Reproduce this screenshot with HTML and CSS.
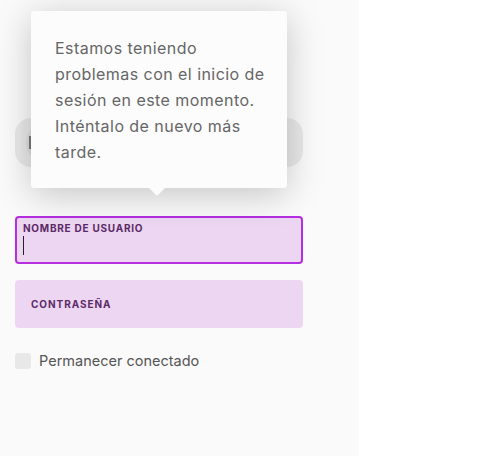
FILE: index.html
```html
<!DOCTYPE html>
<html lang="es">
<head>
<meta charset="utf-8">
<link rel="stylesheet" href="styles.css">
</head>
<body>
<div class="page">
  <div class="panel">
    <div class="sso">
      <div class="sso-inner"><span class="sso-mark"></span></div>
    </div>
    <div class="tooltip">
      Estamos teniendo problemas con el inicio de sesión en este momento. Inténtalo de nuevo más tarde.
    </div>
    <div class="field field-active">
      <span class="label">NOMBRE DE USUARIO</span>
      <span class="caret"></span>
    </div>
    <div class="field field-idle">
      <span class="label">CONTRASEÑA</span>
    </div>
    <label class="remember">
      <span class="checkbox"></span>
      <span class="remember-text">Permanecer conectado</span>
    </label>
  </div>
  <div class="side"></div>
</div>
</body>
</html>
```

FILE: styles.css
```css
* { box-sizing: border-box; }
html, body { margin: 0; padding: 0; }
body {
  font-family: Inter, "Noto Sans", sans-serif;
  background: #ffffff;
  width: 477px;
  height: 456px;
  overflow: hidden;
}
.page {
  display: flex;
  height: 456px;
}
.panel {
  position: relative;
  width: 359px;
  background: #fafafa;
  padding: 118px 56px 0 15px;
  display: flex;
  flex-direction: column;
}
.side {
  flex: 1;
  background: #ffffff;
}
.sso {
  height: 49px;
  border-radius: 16px;
  background: #e9e9e9;
  padding: 0 0 0 11px;
  display: flex;
  align-items: center;
}
.sso-inner {
  width: 40px;
  height: 40px;
  border-radius: 20px;
  background: #dedede;
  display: flex;
  align-items: center;
  padding-left: 3px;
}
.sso-mark {
  width: 3px;
  height: 13px;
  background: #7a7a7a;
}
.tooltip {
  position: absolute;
  left: 31px;
  top: 11px;
  width: 256px;
  padding: 24px 20px 23px 24px;
  background: #fcfcfc;
  border-radius: 3px;
  color: #666666;
  font-size: 16px;
  letter-spacing: 0.45px;
  line-height: 26px;
  box-shadow: 0 6px 36px rgba(0,0,0,0.22);
  z-index: 2;
}
.tooltip::after {
  content: "";
  position: absolute;
  left: 118px;
  bottom: -8px;
  width: 0;
  height: 0;
  border-left: 8px solid transparent;
  border-right: 8px solid transparent;
  border-top: 8px solid #fcfcfc;
}
.field {
  height: 48px;
  border-radius: 4px;
  background: #edd6f2;
  display: flex;
}
.label {
  font-size: 10px;
  font-weight: 700;
  letter-spacing: 0.75px;
  color: #5b2b67;
}
.field-active {
  margin-top: 49px;
  border: 2px solid #b52ee0;
  flex-direction: column;
  padding: 4px 6px 0 6px;
}
.field-active .label {
  line-height: 12px;
}
.caret {
  display: block;
  width: 1px;
  height: 19px;
  margin-top: 2px;
  background: #222;
}
.field-idle {
  margin-top: 16px;
  align-items: center;
  padding: 0 16px;
}
.field-idle .label {
  letter-spacing: 0.95px;
}
.remember {
  margin-top: 24px;
  display: flex;
  align-items: center;
  gap: 8px;
}
.checkbox {
  width: 16px;
  height: 16px;
  border-radius: 3px;
  background: #e8e8e8;
}
.remember-text {
  font-size: 14.5px;
  color: #555555;
}
```
